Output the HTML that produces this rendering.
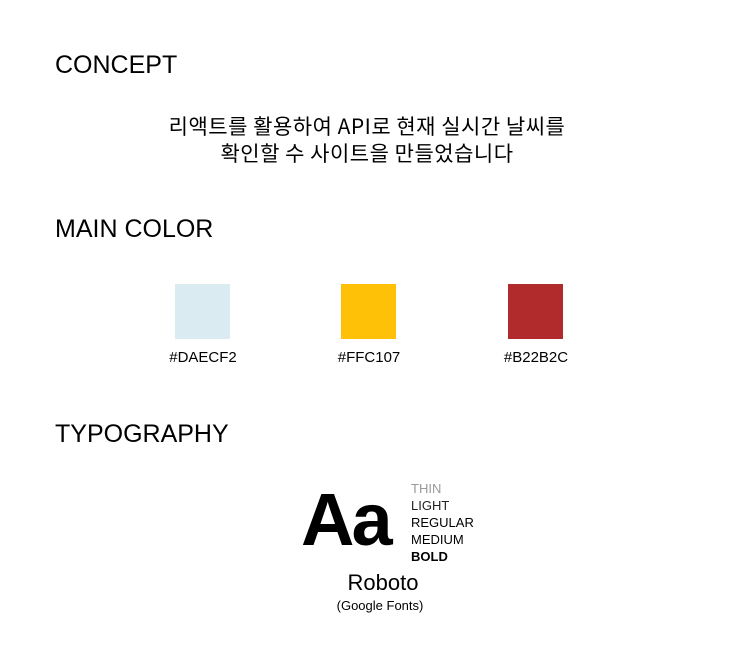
<!DOCTYPE html>
<html><head><meta charset="utf-8"><style>
body{margin:0;width:741px;height:667px;background:#fff;font-family:"Liberation Sans","Noto Sans CJK KR",sans-serif;color:#000;position:relative;overflow:hidden}
.a{position:absolute;white-space:nowrap}
h2{position:absolute;left:55px;margin:0;font-weight:400;font-size:25px;line-height:1}
.sw{position:absolute;top:284px;width:55px;height:55px}
.lb{position:absolute;top:349px;font-size:15px;width:120px;text-align:center}
.w{position:absolute;left:411px;font-size:13px;line-height:17px}
</style></head><body>
<h2 style="top:53px">CONCEPT</h2>
<div class="a" style="left:0;width:734px;text-align:center;top:113px;font-size:21px;letter-spacing:0.5px;line-height:27px;font-family:'Noto Sans CJK KR',sans-serif">리액트를 활용하여 API로 현재 실시간 날씨를<br>확인할 수 사이트을 만들었습니다</div>
<h2 style="top:217px">MAIN COLOR</h2>
<div class="sw" style="left:175px;background:#DAECF2"></div>
<div class="sw" style="left:341px;background:#FFC107"></div>
<div class="sw" style="left:508px;background:#B22B2C"></div>
<div class="lb" style="left:143px">#DAECF2</div>
<div class="lb" style="left:309px">#FFC107</div>
<div class="lb" style="left:476px">#B22B2C</div>
<h2 style="top:422px">TYPOGRAPHY</h2>
<div class="a" style="left:301px;top:483px;font-size:74px;font-weight:700;line-height:1;letter-spacing:-3px">Aa</div>
<div class="w" style="top:480px;color:#999">THIN</div>
<div class="w" style="top:497px;color:#222">LIGHT</div>
<div class="w" style="top:514px">REGULAR</div>
<div class="w" style="top:531px">MEDIUM</div>
<div class="w" style="top:548px;font-weight:700">BOLD</div>
<div class="a" style="left:283px;width:200px;text-align:center;top:570px;font-size:22px">Roboto</div>
<div class="a" style="left:283px;width:194px;text-align:center;top:598px;font-size:13px">(Google Fonts)</div>
</body></html>
